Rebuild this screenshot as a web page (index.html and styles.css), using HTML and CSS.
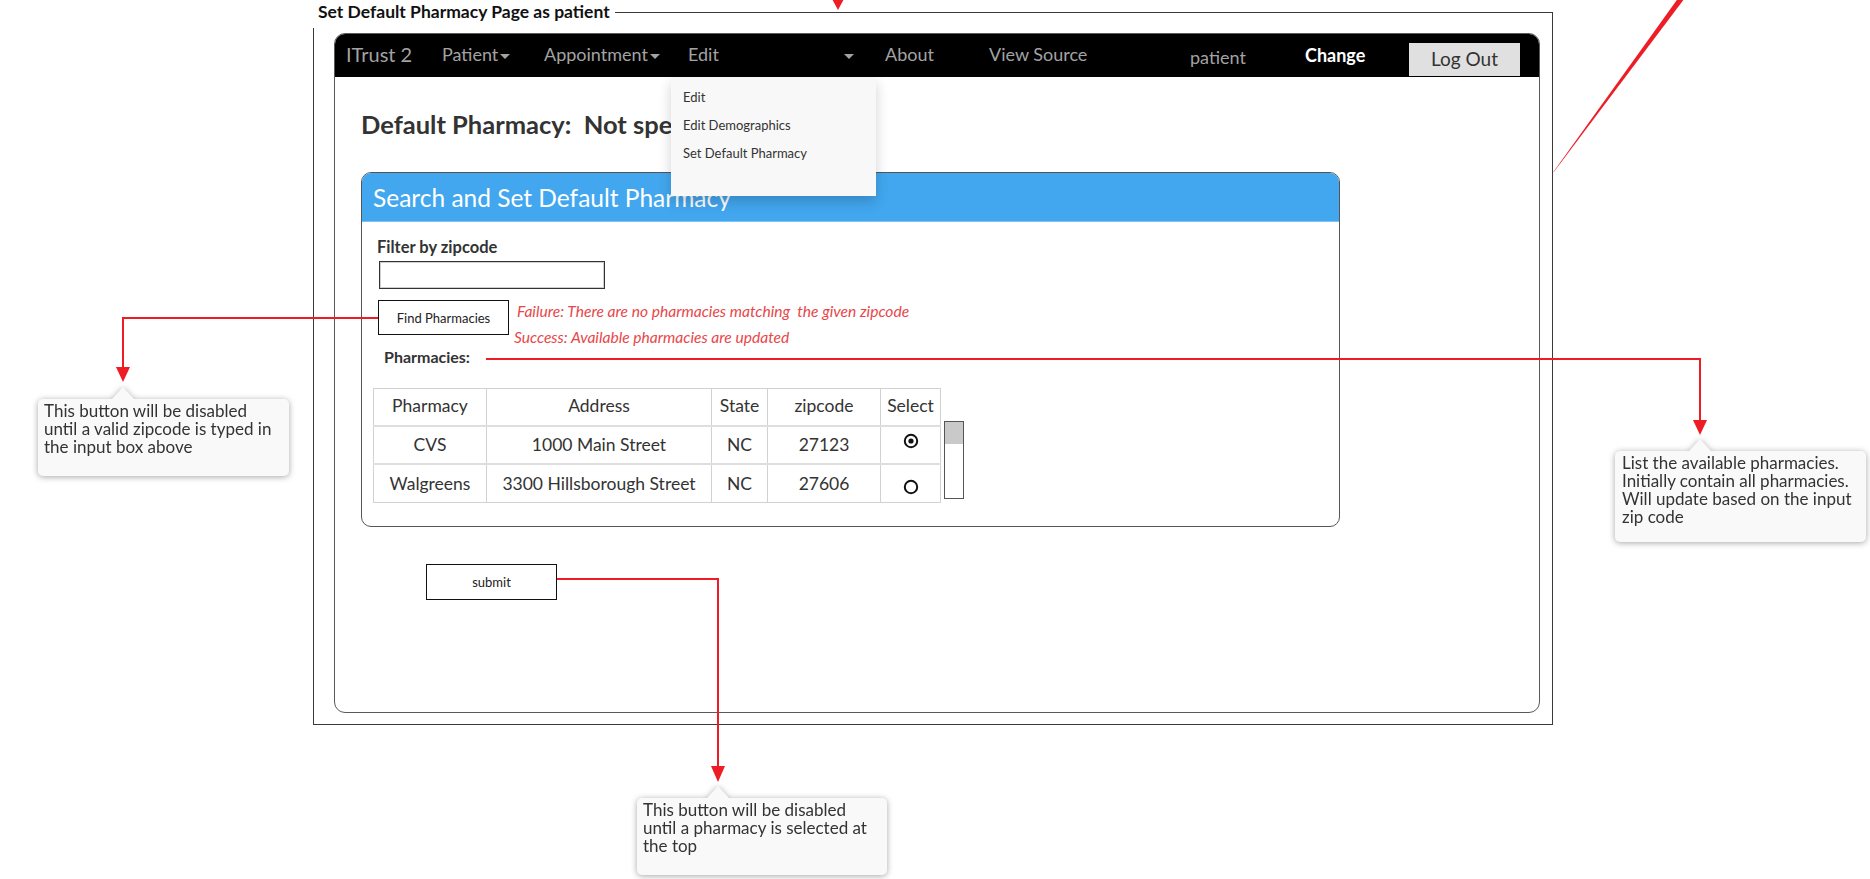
FILE: index.html
```html
<!DOCTYPE html>
<html>
<head>
<meta charset="utf-8">
<title>Set Default Pharmacy Page as patient</title>
<link rel="stylesheet" href="styles.css">
</head>
<body>
<div class="canvas">
  <section class="frame">
    <div class="frame-title">Set Default Pharmacy Page as patient</div>
    <div class="browser">
      <nav class="navbar">
        <span class="nav-item brand">ITrust 2</span>
        <span class="nav-item w-patient">Patient<i class="caret"></i></span>
        <span class="nav-item w-appt">Appointment<i class="caret"></i></span>
        <span class="nav-item w-edit">Edit</span>
        <span class="nav-item w-caret"><i class="caret"></i></span>
        <span class="nav-item w-about">About</span>
        <span class="nav-item w-source">View Source</span>
        <span class="nav-item w-user">patient</span>
        <span class="nav-item w-change">Change</span>
        <span class="logout">Log Out</span>
      </nav>
      <ul class="dropdown">
        <li>Edit</li>
        <li>Edit Demographics</li>
        <li>Set Default Pharmacy</li>
      </ul>
      <main class="content">
        <h1 class="page-heading">Default Pharmacy:&nbsp; Not specified</h1>
        <div class="panel">
          <div class="panel-heading">Search and Set Default Pharmacy</div>
          <div class="panel-body">
            <div class="field-label">Filter by zipcode</div>
            <input class="zip-input" type="text">
            <div class="find-row">
              <button class="btn find-btn">Find Pharmacies</button>
              <div class="messages">
                <p class="msg msg-fail">Failure: There are no pharmacies matching&nbsp; the given zipcode</p>
                <p class="msg msg-ok">Success: Available pharmacies are updated</p>
              </div>
            </div>
            <div class="list-label">Pharmacies:</div>
            <div class="table-row">
              <table class="pharm-table">
                <thead>
                  <tr><th class="c1">Pharmacy</th><th class="c2">Address</th><th class="c3">State</th><th class="c4">zipcode</th><th class="c5">Select</th></tr>
                </thead>
                <tbody>
                  <tr class="r1">
                    <td>CVS</td><td>1000 Main Street</td><td>NC</td><td>27123</td>
                    <td class="radio-cell up"><svg class="radio" width="16" height="16" viewBox="0 0 16 16"><circle cx="8" cy="8" r="6.2" fill="none" stroke="#111" stroke-width="2"/><circle cx="8" cy="8" r="2.6" fill="#111"/></svg></td>
                  </tr>
                  <tr class="r2">
                    <td>Walgreens</td><td>3300 Hillsborough Street</td><td>NC</td><td>27606</td>
                    <td class="radio-cell down"><svg class="radio" width="16" height="16" viewBox="0 0 16 16"><circle cx="8" cy="8" r="6.2" fill="none" stroke="#111" stroke-width="2"/></svg></td>
                  </tr>
                </tbody>
              </table>
              <div class="scrollbar"><div class="thumb"></div></div>
            </div>
          </div>
        </div>
        <button class="btn submit-btn">submit</button>
      </main>
    </div>
  </section>

  <svg class="annotations" width="1870" height="879" viewBox="0 0 1870 879">
    <g fill="none" stroke="#ee1c25" stroke-width="2">
      <path d="M378 318 H123 V368"/>
      <path d="M486 359 H1700 V421"/>
      <path d="M557 579 H718 V767"/>
    </g>
    <g fill="#ee1c25">
      <polygon points="116,367 130,367 123,382"/>
      <polygon points="1693,420 1707,420 1700,435"/>
      <polygon points="711,766 725,766 718,782"/>
      <polygon points="831,-3 845,-3 838,10"/>
      <polygon points="1553,172.5 1554.2,171.6 1686,-3.5 1681.5,-6.5"/>
    </g>
  </svg>

  <div class="note note-find">This button will be disabled<br>until a valid zipcode is typed in<br>the input box above</div>
  <div class="note note-list">List the available pharmacies.<br>Initially contain all pharmacies.<br>Will update based on the input<br>zip code</div>
  <div class="note note-submit">This button will be disabled<br>until a pharmacy is selected at<br>the top</div>
</div>
</body>
</html>
```

FILE: styles.css
```css
* { box-sizing: border-box; }

html, body {
  margin: 0;
  padding: 0;
}

body {
  width: 1870px;
  height: 879px;
  overflow: hidden;
  background: #fff;
  font-family: Lato, "Open Sans", sans-serif;
  color: #333;
}

.canvas {
  position: relative;
  width: 1870px;
  height: 879px;
  padding: 12px 0 0 313px;
}

/* outer wireframe box */
.frame {
  position: relative;
  width: 1240px;
  height: 713px;
  border: 1px solid #3a3a3a;
  padding: 20px 12px 11px 20px;
}

.frame-title {
  position: absolute;
  top: -13px;
  left: -1px;
  height: 28px;
  padding: 0 5px;
  background: #fff;
  font-weight: 700;
  font-size: 17.5px;
  line-height: 24px;
  color: #111;
  white-space: nowrap;
}

/* browser mock */
.browser {
  position: relative;
  height: 680px;
  border: 1px solid #5a5a5a;
  border-radius: 11px;
  overflow: hidden;
  background: #fff;
}

.navbar {
  display: flex;
  align-items: flex-start;
  height: 43px;
  padding-left: 11px;
  background: #000;
}

.nav-item {
  flex: none;
  font-size: 18px;
  line-height: 41px;
  color: #a3a3a3;
  white-space: nowrap;
}

.brand { width: 96px; font-size: 20px; line-height: 40px; }
.w-patient { width: 102px; }
.w-appt { width: 144px; }
.w-edit { width: 153px; }
.w-caret { width: 44px; padding-left: 1px; }
.w-about { width: 104px; }
.w-source { width: 201px; }
.w-user { width: 115px; padding-top: 3px; }
.w-change { width: 104px; padding-top: 1px; color: #fff; font-weight: 700; }

.caret {
  display: inline-block;
  width: 0;
  height: 0;
  margin-left: 2px;
  vertical-align: middle;
  border-top: 5px solid #a3a3a3;
  border-left: 5px solid transparent;
  border-right: 5px solid transparent;
}

.logout {
  flex: none;
  width: 111px;
  height: 33px;
  margin-top: 9px;
  background: #e0e0e0;
  color: #333;
  font-size: 19px;
  line-height: 32px;
  text-align: center;
}

.dropdown {
  position: absolute;
  top: 43px;
  left: 336px;
  width: 205px;
  height: 119px;
  margin: 0;
  padding: 6px 0 0 12px;
  list-style: none;
  background: #f8f8f8;
  box-shadow: 0 6px 12px rgba(0, 0, 0, 0.18);
  z-index: 2;
}

.dropdown li {
  font-size: 13px;
  line-height: 28px;
  color: #333;
  white-space: nowrap;
}

.content {
  padding: 0 0 0 26px;
}

.page-heading {
  margin: 32px 0 0 0;
  font-size: 25.5px;
  line-height: 30px;
  font-weight: 700;
  color: #333;
  white-space: nowrap;
}

.panel {
  width: 979px;
  margin-top: 33px;
  border: 1px solid #555;
  border-radius: 10px;
  overflow: hidden;
}

.panel-heading {
  height: 49px;
  padding-left: 11px;
  background: #42a7ef;
  border-bottom: 1px solid #7cc2f3;
  color: #fff;
  font-size: 24.5px;
  line-height: 49px;
}

.panel-body {
  padding: 15px 0 23px 11px;
}

.field-label {
  margin-left: 4px;
  font-size: 16.5px;
  line-height: 20px;
  font-weight: 700;
  color: #333;
}

.zip-input {
  display: block;
  width: 226px;
  height: 28px;
  margin: 4px 0 0 6px;
  border: 1px solid #333;
  box-shadow: inset 0 0 0 1px #cfcfcf;
  background: #fff;
  font: inherit;
}

.find-row {
  display: flex;
  align-items: flex-start;
  margin-top: 11px;
}

.btn {
  display: block;
  background: #fff;
  border: 1px solid #111;
  border-radius: 0;
  color: #222;
  font-family: inherit;
  font-size: 13px;
  padding: 0;
}

.find-btn {
  flex: none;
  width: 131px;
  height: 35px;
  margin-left: 5px;
}

.messages {
  margin: 1px 0 0 8px;
}

.msg {
  margin: 0;
  font-size: 15.6px;
  line-height: 20px;
  font-style: italic;
  color: #e8474a;
  white-space: nowrap;
}

.msg-ok {
  margin: 6px 0 0 -3px;
}

.list-label {
  margin-left: 11px;
  font-size: 16px;
  line-height: 20px;
  font-weight: 700;
  color: #333;
}

.table-row {
  display: flex;
  align-items: flex-start;
  margin-top: 21px;
}

.pharm-table {
  border-collapse: collapse;
  border: 1px solid #d2d2d2;
  font-size: 17.5px;
  color: #333;
}

.pharm-table th,
.pharm-table td {
  padding: 0;
  border-left: 1px solid #d2d2d2;
  border-right: 1px solid #d2d2d2;
  text-align: center;
  font-weight: 400;
  vertical-align: middle;
  white-space: nowrap;
}

.pharm-table thead tr { height: 37px; }
.pharm-table thead th { padding-bottom: 2px; }
.pharm-table tbody tr { border-top: 2px solid #dedede; }
.pharm-table .r1 { height: 38px; }
.pharm-table .r2 { height: 39px; }

.c1 { width: 113px; }
.c2 { width: 225px; }
.c3 { width: 56px; }
.c4 { width: 113px; }
.c5 { width: 60px; }

.radio { display: block; margin: 0 auto; }
.radio-cell.up { padding-bottom: 7px; }
.radio-cell.down { padding-top: 8px; }

.scrollbar {
  flex: none;
  width: 20px;
  height: 78px;
  margin: 33px 0 0 3px;
  border: 1px solid #555;
  background: #fff;
}

.thumb {
  height: 22px;
  background: #c9c9c9;
}

.submit-btn {
  width: 131px;
  height: 36px;
  margin: 37px 0 0 65px;
}

/* annotation layer */
.annotations {
  position: absolute;
  top: 0;
  left: 0;
  overflow: visible;
  pointer-events: none;
  z-index: 5;
}

.note {
  position: absolute;
  z-index: 6;
  padding: 3px 6px 0 6px;
  background: #f9f9f9;
  border-radius: 5px;
  font-size: 17px;
  line-height: 18px;
  color: #333;
  white-space: nowrap;
  filter: drop-shadow(0 1px 3px rgba(0, 0, 0, 0.35));
}

.note::before {
  content: "";
  position: absolute;
  top: -12px;
  width: 0;
  height: 0;
  border-left: 11px solid transparent;
  border-right: 11px solid transparent;
  border-bottom: 12px solid #f9f9f9;
}

.note-find { left: 38px; top: 399px; width: 251px; height: 77px; }
.note-find::before { left: 74px; }

.note-list { left: 1615px; top: 451px; width: 251px; height: 91px; padding-left: 7px; }
.note-list::before { left: 74px; }

.note-submit { left: 637px; top: 798px; width: 250px; height: 77px; }
.note-submit::before { left: 70px; }
```
